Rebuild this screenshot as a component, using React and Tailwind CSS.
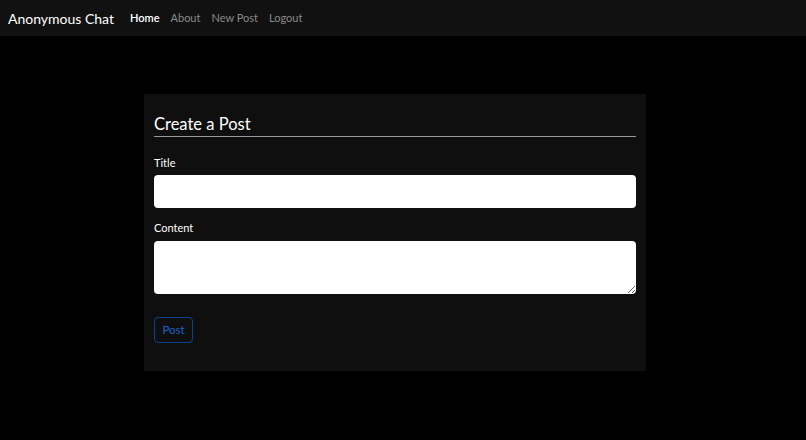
import React from "react";

const App = () => {
  return (
    <div className="min-h-[440px] bg-black text-white font-['Lato',sans-serif]">
      <nav className="flex items-center h-9 bg-[#111111] px-2">
        <span className="text-[14px] text-white mr-4">Anonymous Chat</span>
        <div className="flex gap-[11px] text-[11px]">
          <a className="text-white font-semibold">Home</a>
          <a className="text-[#8a8a8a]">About</a>
          <a className="text-[#8a8a8a]">New Post</a>
          <a className="text-[#8a8a8a]">Logout</a>
        </div>
      </nav>
      <div className="flex justify-center pt-[58px] pr-[16px]">
        <div className="w-[502px] bg-[#0f0f0f] px-[10px] pt-[18px] pb-[28px]">
          <h2 className="text-[16.5px] leading-6 border-b border-[#9a9a9a]">Create a Post</h2>
          <label className="block text-[11px] leading-4 mt-[18px] mb-[4px]">Title</label>
          <input type="text" className="block w-full h-[33px] rounded bg-white text-black px-2 outline-none" />
          <label className="block text-[11px] leading-4 mt-[12px] mb-[5px]">Content</label>
          <textarea className="block w-full h-[53px] rounded bg-white text-black px-2 outline-none" />
          <button className="mt-[23px] h-[26px] w-[39px] border border-[#0b4391] rounded text-[11.5px] text-[#1b62c8]">Post</button>
        </div>
      </div>
    </div>
  );
};

export default App;
